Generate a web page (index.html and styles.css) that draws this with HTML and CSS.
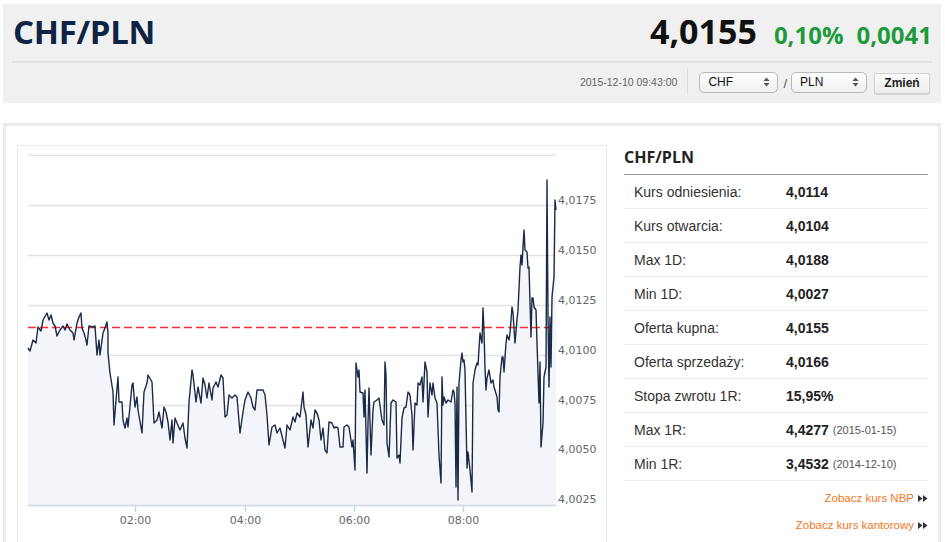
FILE: index.html
```html
<!DOCTYPE html>
<html lang="pl">
<head>
<meta charset="utf-8">
<title>CHF/PLN</title>
<link rel="stylesheet" href="styles.css">
</head>
<body>
<div class="page">
  <header class="quote-head">
    <div class="head-top">
      <h1 class="pair">CHF/PLN</h1>
      <div class="price">
        <span class="rate">4,0155</span>
        <span class="chg">0,10%</span>
        <span class="chg chg-abs">0,0041</span>
      </div>
    </div>
    <div class="head-bottom">
      <span class="stamp">2015-12-10 09:43:00</span>
      <span class="vsep"></span>
      <div class="sel sel-a"><span>CHF</span><svg class="arr" width="7" height="10" viewBox="0 0 7 10"><polygon points="0.5,4 3.5,0.5 6.5,4" fill="#555"/><polygon points="0.5,6 3.5,9.5 6.5,6" fill="#555"/></svg></div>
      <span class="slash">/</span>
      <div class="sel sel-b"><span>PLN</span><svg class="arr" width="7" height="10" viewBox="0 0 7 10"><polygon points="0.5,4 3.5,0.5 6.5,4" fill="#555"/><polygon points="0.5,6 3.5,9.5 6.5,6" fill="#555"/></svg></div>
      <button class="btn">Zmień</button>
    </div>
  </header>

  <section class="card">
    <div class="chart">
      <svg class="plot" width="588" height="400" viewBox="18 146 588 400">
        <g class="grid" stroke="#e3e3e3" stroke-width="1.5">
          <line x1="28" y1="155.5" x2="556" y2="155.5"/>
          <line x1="28" y1="205.5" x2="556" y2="205.5"/>
          <line x1="28" y1="255.5" x2="556" y2="255.5"/>
          <line x1="28" y1="305.5" x2="556" y2="305.5"/>
          <line x1="28" y1="355.5" x2="556" y2="355.5"/>
          <line x1="28" y1="405.5" x2="556" y2="405.5"/>
          <line x1="28" y1="455.5" x2="556" y2="455.5"/>
        </g>
        <path fill="#f4f5f8" d="M28,505 L28,348 30,351 33,340 36,343 38,327 41,331 43,320 47,313 49,320 51,315 53,323 55,326 57,336 60,330 63,326 65,330 67,324 70,330 73,333 74,340 77,323 79,317 81,313 82,328 84,333 86,340 87,345 89,326 93,327 95,326 97,355 99,340 100,355 103,333 105,328 107,322 108,333 108,353 110,373 113,392 114,425 116,400 118,377 119,402 122,402 123,420 125,428 127,418 128,427 132,385 133,383 135,407 137,397 138,410 142,433 144,392 147,383 148,375 152,382 154,423 157,420 159,412 162,428 164,407 166,412 168,422 170,440 172,420 173,443 175,418 177,423 180,430 183,423 185,438 187,448 189,402 192,370 193,375 196,402 198,387 201,403 203,378 205,385 207,398 209,383 212,400 213,388 216,382 218,387 221,375 223,378 225,417 227,415 229,395 232,398 235,395 237,397 240,433 243,412 245,400 248,392 251,398 253,407 255,410 257,390 263,390 265,395 267,415 269,445 272,427 275,425 277,433 280,428 283,440 285,448 287,425 290,430 293,417 295,422 297,413 300,417 303,392 304,407 306,415 308,447 311,420 313,428 315,410 317,413 319,420 321,440 323,428 325,450 327,453 329,422 332,423 334,428 336,427 338,428 340,447 343,447 344,427 347,425 349,427 352,447 353,440 355,470 356,363 358,377 359,370 360,392 363,393 364,417 365,390 367,473 368,423 369,388 371,455 373,410 374,402 377,400 379,398 382,420 384,425 385,362 386,375 387,443 389,457 391,403 393,400 396,402 397,458 399,455 400,463 402,418 404,408 406,407 408,392 410,395 412,415 413,450 415,403 417,405 418,383 420,385 422,377 423,402 425,362 427,372 428,417 430,383 432,395 433,383 435,398 437,403 439,455 441,483 442,377 443,405 444,397 446,403 448,400 451,402 453,390 454,392 455,403 456,487 457,387 458,500 459,383 461,360 462,353 463,362 464,360 465,370 467,468 468,452 470,470 472,492 473,383 475,370 477,363 478,365 480,333 482,343 483,308 484,330 485,368 486,390 487,378 489,370 491,383 493,380 494,387 495,390 497,397 498,410 499,412 500,377 502,357 503,357 504,372 506,343 507,335 509,340 510,333 512,307 513,313 515,343 517,320 518,310 520,267 521,255 522,265 524,230 525,250 527,252 528,268 529,267 531,337 532,298 533,298 534,307 536,310 537,343 539,403 540,362 541,447 543,423 544,377 546,367 547,180 548,317 549,387 550,317 551,367 552,297 554,277 555,200 556,210 L556,505 Z"/>
        <line x1="28" y1="327.5" x2="556" y2="327.5" stroke="#ff2e2e" stroke-width="1.5" stroke-dasharray="8,4"/>
        <polyline fill="none" stroke="#1b2a48" stroke-width="1.4" stroke-linejoin="round" points="28,348 30,351 33,340 36,343 38,327 41,331 43,320 47,313 49,320 51,315 53,323 55,326 57,336 60,330 63,326 65,330 67,324 70,330 73,333 74,340 77,323 79,317 81,313 82,328 84,333 86,340 87,345 89,326 93,327 95,326 97,355 99,340 100,355 103,333 105,328 107,322 108,333 108,353 110,373 113,392 114,425 116,400 118,377 119,402 122,402 123,420 125,428 127,418 128,427 132,385 133,383 135,407 137,397 138,410 142,433 144,392 147,383 148,375 152,382 154,423 157,420 159,412 162,428 164,407 166,412 168,422 170,440 172,420 173,443 175,418 177,423 180,430 183,423 185,438 187,448 189,402 192,370 193,375 196,402 198,387 201,403 203,378 205,385 207,398 209,383 212,400 213,388 216,382 218,387 221,375 223,378 225,417 227,415 229,395 232,398 235,395 237,397 240,433 243,412 245,400 248,392 251,398 253,407 255,410 257,390 263,390 265,395 267,415 269,445 272,427 275,425 277,433 280,428 283,440 285,448 287,425 290,430 293,417 295,422 297,413 300,417 303,392 304,407 306,415 308,447 311,420 313,428 315,410 317,413 319,420 321,440 323,428 325,450 327,453 329,422 332,423 334,428 336,427 338,428 340,447 343,447 344,427 347,425 349,427 352,447 353,440 355,470 356,363 358,377 359,370 360,392 363,393 364,417 365,390 367,473 368,423 369,388 371,455 373,410 374,402 377,400 379,398 382,420 384,425 385,362 386,375 387,443 389,457 391,403 393,400 396,402 397,458 399,455 400,463 402,418 404,408 406,407 408,392 410,395 412,415 413,450 415,403 417,405 418,383 420,385 422,377 423,402 425,362 427,372 428,417 430,383 432,395 433,383 435,398 437,403 439,455 441,483 442,377 443,405 444,397 446,403 448,400 451,402 453,390 454,392 455,403 456,487 457,387 458,500 459,383 461,360 462,353 463,362 464,360 465,370 467,468 468,452 470,470 472,492 473,383 475,370 477,363 478,365 480,333 482,343 483,308 484,330 485,368 486,390 487,378 489,370 491,383 493,380 494,387 495,390 497,397 498,410 499,412 500,377 502,357 503,357 504,372 506,343 507,335 509,340 510,333 512,307 513,313 515,343 517,320 518,310 520,267 521,255 522,265 524,230 525,250 527,252 528,268 529,267 531,337 532,298 533,298 534,307 536,310 537,343 539,403 540,362 541,447 543,423 544,377 546,367 547,180 548,317 549,387 550,317 551,367 552,297 554,277 555,200 556,210"/>
        <g stroke="#c9d6e3" stroke-width="1.5">
          <line x1="28" y1="505.5" x2="556" y2="505.5"/>
          <line x1="135.5" y1="505" x2="135.5" y2="512"/>
          <line x1="245.5" y1="505" x2="245.5" y2="512"/>
          <line x1="354.5" y1="505" x2="354.5" y2="512"/>
          <line x1="463.5" y1="505" x2="463.5" y2="512"/>
        </g>
        <g class="ylab">
          <text x="558" y="204">4,0175</text>
          <text x="558" y="254">4,0150</text>
          <text x="558" y="304">4,0125</text>
          <text x="558" y="354">4,0100</text>
          <text x="558" y="404">4,0075</text>
          <text x="558" y="453">4,0050</text>
          <text x="558" y="503">4,0025</text>
        </g>
        <g class="xlab" text-anchor="middle">
          <text x="135.5" y="524">02:00</text>
          <text x="245.5" y="524">04:00</text>
          <text x="354.5" y="524">06:00</text>
          <text x="463.5" y="524">08:00</text>
        </g>
      </svg>
    </div>

    <aside class="stats">
      <h2 class="stats-title">CHF/PLN</h2>
      <div class="row"><span class="lbl">Kurs odniesienia:</span><span class="val">4,0114</span></div>
      <div class="row"><span class="lbl">Kurs otwarcia:</span><span class="val">4,0104</span></div>
      <div class="row"><span class="lbl">Max 1D:</span><span class="val">4,0188</span></div>
      <div class="row"><span class="lbl">Min 1D:</span><span class="val">4,0027</span></div>
      <div class="row"><span class="lbl">Oferta kupna:</span><span class="val">4,0155</span></div>
      <div class="row"><span class="lbl">Oferta sprzedaży:</span><span class="val">4,0166</span></div>
      <div class="row"><span class="lbl">Stopa zwrotu 1R:</span><span class="val">15,95%</span></div>
      <div class="row"><span class="lbl">Max 1R:</span><span class="val">4,4277</span><span class="dt">(2015-01-15)</span></div>
      <div class="row"><span class="lbl">Min 1R:</span><span class="val">3,4532</span><span class="dt">(2014-12-10)</span></div>
      <div class="links">
        <a class="more" href="#">Zobacz kurs NBP<svg class="dbl" width="10" height="7" viewBox="0 0 10 7"><polygon points="0,0 4.5,3.5 0,7" fill="#333"/><polygon points="5,0 9.5,3.5 5,7" fill="#333"/></svg></a>
        <a class="more" href="#">Zobacz kurs kantorowy<svg class="dbl" width="10" height="7" viewBox="0 0 10 7"><polygon points="0,0 4.5,3.5 0,7" fill="#333"/><polygon points="5,0 9.5,3.5 5,7" fill="#333"/></svg></a>
      </div>
    </aside>
  </section>
</div>
</body>
</html>
```

FILE: styles.css
```css
* { box-sizing: border-box; }
html, body { margin: 0; padding: 0; background: #fff; }
body { font-family: "Liberation Sans", Arial, sans-serif; color: #333; overflow: hidden; }

.page { padding: 4px 4px 0 3px; }

.quote-head {
  background: #f0f0f0;
  height: 99px;
  padding: 4px 9px 0 9px;
}
.head-top {
  display: flex;
  justify-content: space-between;
  align-items: baseline;
  height: 55px;
  border-bottom: 2px solid #e1e1e1;
}
.pair {
  margin: 0;
  font-family: "Open Sans", sans-serif;
  font-weight: 700;
  font-size: 33px;
  line-height: 46px;
  color: #0f2344;
  padding-left: 1px;
  letter-spacing: -0.3px;
}
.price {
  display: flex;
  align-items: baseline;
  font-family: "Open Sans", sans-serif;
  font-weight: 700;
  line-height: 46px;
}
.rate { font-size: 34px; color: #111; margin-right: 17px; }
.chg { font-size: 24px; color: #1e9a3c; }
.chg-abs { margin-left: 13px; }

.head-bottom {
  display: flex;
  justify-content: flex-end;
  align-items: center;
  height: 38px;
  padding-right: 2px;
}
.stamp { font-size: 10.5px; color: #666; }
.vsep { width: 1px; height: 26px; background: #dcdcdc; margin: 0 11px 0 10px; }
.sel {
  display: flex;
  align-items: center;
  justify-content: space-between;
  height: 21px;
  padding: 0 7px 0 8px;
  border: 1px solid #b8b8b8;
  border-radius: 5px;
  background: linear-gradient(#ffffff, #efefef);
  font-size: 12px;
  color: #111;
}
.sel-a { width: 79px; }
.sel-b { width: 76px; }
.arr { display: block; }
.slash { font-size: 13px; color: #555; margin: 2px 4px 0 5px; }
.btn {
  margin-left: 7px;
  width: 56px;
  height: 21px;
  margin-top: 2px;
  padding: 0;
  border: 1px solid #d2d2d2;
  border-radius: 2px;
  background: linear-gradient(#fbfbfb, #ececec);
  box-shadow: 0 1px 1px rgba(0,0,0,0.12);
  font-family: "Liberation Sans", Arial, sans-serif;
  font-weight: 700;
  font-size: 12px;
  color: #222;
}

.card {
  margin-top: 20px;
  border: 3px solid #ececec;
  border-bottom: 0;
  height: 430px;
  display: flex;
  align-items: flex-start;
  padding: 19px 10px 0 11px;
  gap: 17px;
}
.chart {
  width: 590px;
  height: 420px;
  border: 1px solid #e9e9e9;
  flex: none;
}
.plot { display: block; }
.ylab text, .xlab text {
  font-family: "DejaVu Sans", Verdana, sans-serif;
  font-size: 11px;
  fill: #666;
}

.stats { flex: 1; }
.stats-title {
  margin: 1px 0 0 0;
  font-family: "Open Sans", sans-serif;
  font-weight: 700;
  font-size: 16px;
  line-height: 22px;
  color: #222;
  padding-bottom: 6px;
  border-bottom: 1px solid #9a9a9a;
}
.row {
  display: flex;
  align-items: center;
  height: 34px;
  border-bottom: 1px solid #ececec;
  padding-left: 10px;
  font-size: 14px;
}
.lbl { width: 152px; color: #333; }
.val { font-weight: 700; color: #222; }
.dt { font-size: 11px; color: #555; margin-left: 4px; margin-top: 1px; }

.links {
  display: flex;
  flex-direction: column;
  align-items: flex-end;
  padding-top: 4px;
}
.more {
  display: flex;
  align-items: center;
  line-height: 27px;
  font-size: 11.5px;
  color: #f47521;
  text-decoration: none;
}
.dbl { margin-left: 4px; display: block; }
```
